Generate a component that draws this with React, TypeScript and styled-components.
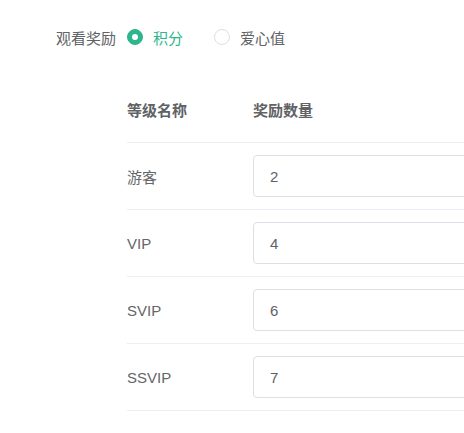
import React, { useState } from "react";
import { styled, createGlobalStyle } from "styled-components";

const GlobalStyle = createGlobalStyle`
  html, body {
    margin: 0;
    padding: 0;
    background: #ffffff;
    overflow: hidden;
  }
  body {
    font-family: "Liberation Sans", "Noto Sans CJK SC", sans-serif;
  }
`;

const Page = styled.div`
  width: 100%;
  padding-top: 17px;
  overflow: hidden;
`;

const FormItem = styled.div`
  display: flex;
  align-items: center;
  height: 40px;
`;

const FormLabel = styled.label`
  width: 127px;
  box-sizing: border-box;
  padding-right: 11px;
  text-align: right;

  font-size: 15px;
  color: #606266;
`;

const RadioGroup = styled.div`
  display: flex;
  align-items: center;
  gap: 31px;
`;

const RadioItem = styled.label<{ $checked: boolean }>`
  display: flex;
  align-items: center;
  gap: 10px;
  cursor: pointer;

  font-size: 15px;
  color: ${(p) => (p.$checked ? "#2db58b" : "#606266")};
`;

const RadioCircle = styled.span<{ $checked: boolean }>`
  width: 16px;
  height: 16px;
  box-sizing: border-box;
  border-radius: 50%;
  border: 1px solid ${(p) => (p.$checked ? "#2db58b" : "#dcdfe6")};
  background: ${(p) => (p.$checked ? "#2db58b" : "#ffffff")};

  display: flex;
  align-items: center;
  justify-content: center;

  &::after {
    content: "";
    width: 6px;
    height: 6px;
    border-radius: 50%;
    background: #ffffff;
    display: ${(p) => (p.$checked ? "block" : "none")};
  }
`;

const Table = styled.div`
  margin-top: 19px;
  margin-left: 127px;
  width: 460px;
`;

const Row = styled.div`
  display: flex;
  align-items: center;
  height: 66px;
  border-bottom: 1px solid #ebeef5;
`;

const HeadCell = styled.div<{ $width?: number }>`
  width: ${(p) => (p.$width ? `${p.$width}px` : "auto")};
  flex: ${(p) => (p.$width ? "none" : "1")};

  font-size: 15px;
  font-weight: bold;
  color: #606266;
`;

const NameCell = styled.div`
  width: 126px;
  flex: none;

  font-size: 15px;
  color: #666666;
`;

const ValueInput = styled.input`
  flex: 1;
  height: 42px;
  box-sizing: border-box;
  padding: 0 16px;
  border: 1px solid #dcdfe6;
  border-radius: 4px;
  outline: none;

  font-family: "Liberation Sans", "Noto Sans CJK SC", sans-serif;
  font-size: 15px;
  color: #606266;
`;

const levels = [
  { name: "游客", value: "2" },
  { name: "VIP", value: "4" },
  { name: "SVIP", value: "6" },
  { name: "SSVIP", value: "7" },
];

const App = () => {
  const [reward, setReward] = useState("points");
  const [values, setValues] = useState(levels.map((l) => l.value));

  const handleChange = (index: number, e: any) => {
    const next = [...values];
    next[index] = e.target.value;
    setValues(next);
  };

  return (
    <Page>
      <GlobalStyle />
      <FormItem>
        <FormLabel>观看奖励</FormLabel>
        <RadioGroup>
          <RadioItem
            $checked={reward === "points"}
            onClick={() => setReward("points")}
          >
            <RadioCircle $checked={reward === "points"} />
            积分
          </RadioItem>
          <RadioItem
            $checked={reward === "love"}
            onClick={() => setReward("love")}
          >
            <RadioCircle $checked={reward === "love"} />
            爱心值
          </RadioItem>
        </RadioGroup>
      </FormItem>

      <Table>
        <Row>
          <HeadCell $width={126}>等级名称</HeadCell>
          <HeadCell>奖励数量</HeadCell>
        </Row>
        {levels.map((level, i) => (
          <Row key={level.name}>
            <NameCell>{level.name}</NameCell>
            <ValueInput
              value={values[i]}
              onChange={(e) => handleChange(i, e)}
            />
          </Row>
        ))}
      </Table>
    </Page>
  );
};

export default App;
